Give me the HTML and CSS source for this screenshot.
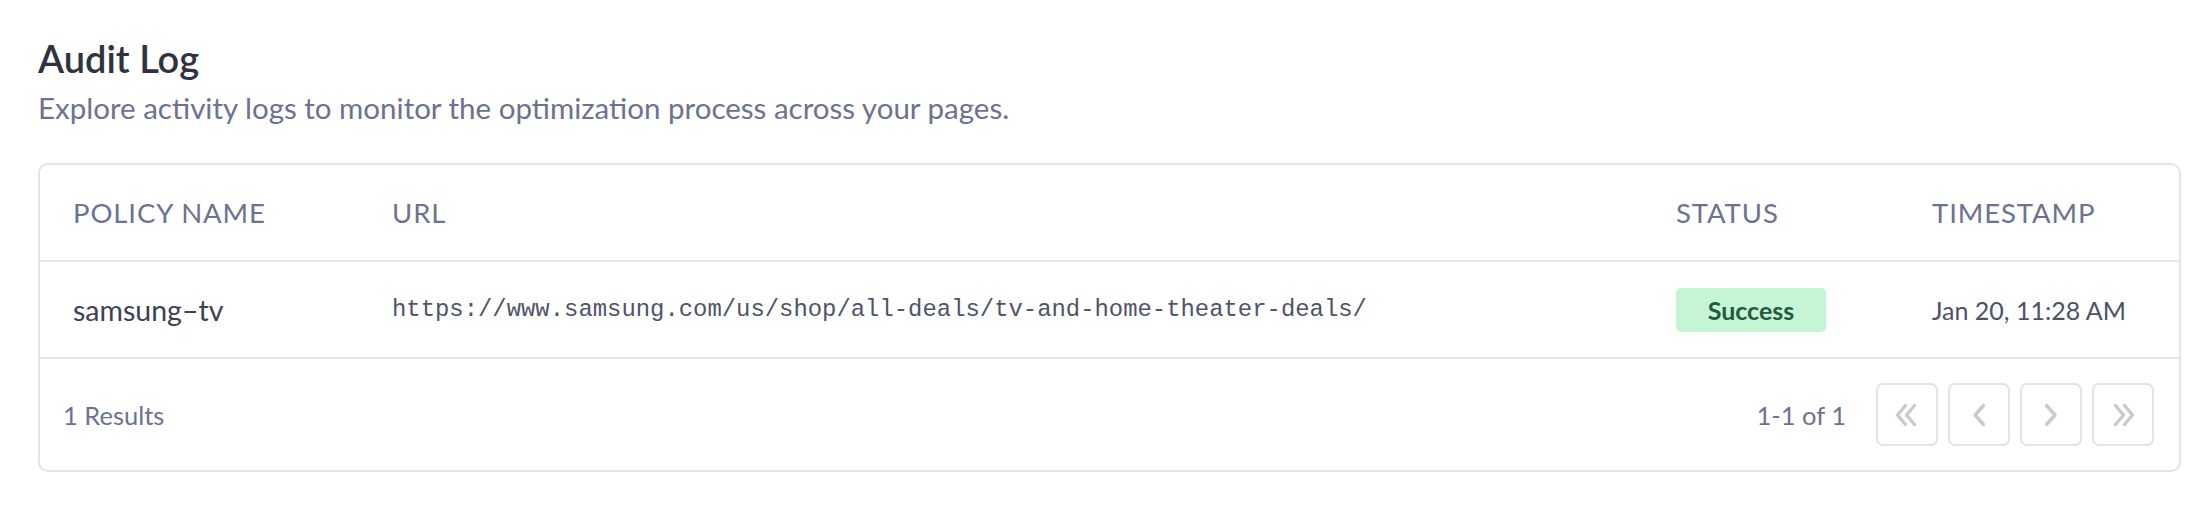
FILE: index.html
```html
<!DOCTYPE html>
<html lang="en">
<head>
<meta charset="utf-8">
<title>Audit Log</title>
<link rel="stylesheet" href="styles.css">
</head>
<body>
<div class="page">
  <h1 class="title">Audit Log</h1>
  <p class="subtitle">Explore activity logs to monitor the optimization process across your pages.</p>
  <div class="card">
    <div class="row head">
      <div>POLICY NAME</div>
      <div>URL</div>
      <div>STATUS</div>
      <div>TIMESTAMP</div>
    </div>
    <div class="row body">
      <div class="name">samsung–tv</div>
      <div class="url">https://www.samsung.com/us/shop/all-deals/tv-and-home-theater-deals/</div>
      <div><span class="badge">Success</span></div>
      <div class="time">Jan 20, 11:28 AM</div>
    </div>
    <div class="footer">
      <span class="results">1 Results</span>
      <div class="pager">
        <span class="range">1-1 of 1</span>
        <button class="pbtn" aria-label="First page"><svg viewBox="0 0 30 30" width="30" height="30"><path d="M13.5 5.5l-8 9.5 8 9.5M22.5 5.5l-8 9.5 8 9.5"/></svg></button>
        <button class="pbtn" aria-label="Previous page"><svg viewBox="0 0 30 30" width="30" height="30"><path d="M19.5 5.5l-8.5 9.5 8.5 9.5"/></svg></button>
        <button class="pbtn" aria-label="Next page"><svg viewBox="0 0 30 30" width="30" height="30"><path d="M10.5 5.5l8.5 9.5-8.5 9.5"/></svg></button>
        <button class="pbtn" aria-label="Last page"><svg viewBox="0 0 30 30" width="30" height="30"><path d="M7.5 5.5l8 9.5-8 9.5M16.5 5.5l8 9.5-8 9.5"/></svg></button>
      </div>
    </div>
  </div>
</div>
</body>
</html>
```
FILE: styles.css
```css
* { box-sizing: border-box; }
html, body { margin: 0; padding: 0; background: #ffffff; }
body {
  font-family: Lato, "Open Sans", sans-serif;
  color: #3f4356;
}
.page {
  padding: 35px 29px 0 38px;
}
.title {
  margin: 0;
  font-size: 38px;
  line-height: 46px;
  font-weight: 600;
  color: #30323f;
}
.subtitle {
  margin: 9px 0 38px 0;
  font-size: 29.5px;
  line-height: 35px;
  color: #6c7290;
}
.card {
  border: 2px solid #e3e4e9;
  border-radius: 10px;
}
.row {
  display: grid;
  grid-template-columns: 319px 1284px 256px 1fr;
  align-items: center;
  height: 97px;
  padding-left: 33px;
  border-bottom: 2px solid #e3e4e9;
}
.head {
  font-size: 27.5px;
  letter-spacing: 0.9px;
  color: #6c7290;
}
.body {
  font-size: 25px;
  color: #3f4356;
}
.name { font-size: 28.5px; color: #3d4155; }
.url {
  font-family: "Liberation Mono", "DejaVu Sans Mono", monospace;
  font-size: 23.9px;
  color: #4f5468;
}
.badge {
  display: inline-flex;
  align-items: center;
  justify-content: center;
  width: 150px;
  height: 44px;
  border-radius: 5px;
  background: #c6f5d6;
  color: #225b3e;
  font-weight: 700;
  font-size: 25px;
}
.time { color: #4d5266; }
.footer {
  display: flex;
  align-items: center;
  justify-content: space-between;
  height: 111px;
  padding: 0 25px 0 23px;
  font-size: 25.5px;
  color: #6c7290;
}
.pager {
  display: flex;
  align-items: center;
  gap: 10px;
}
.range { margin-right: 20px; }
.pbtn {
  width: 62px;
  height: 63px;
  padding: 0;
  display: flex;
  align-items: center;
  justify-content: center;
  background: #ffffff;
  border: 2px solid #e3e4e9;
  border-radius: 7px;
}
.pbtn svg path {
  fill: none;
  stroke: #c8cad1;
  stroke-width: 3.4;
  stroke-linecap: round;
  stroke-linejoin: round;
}
```
